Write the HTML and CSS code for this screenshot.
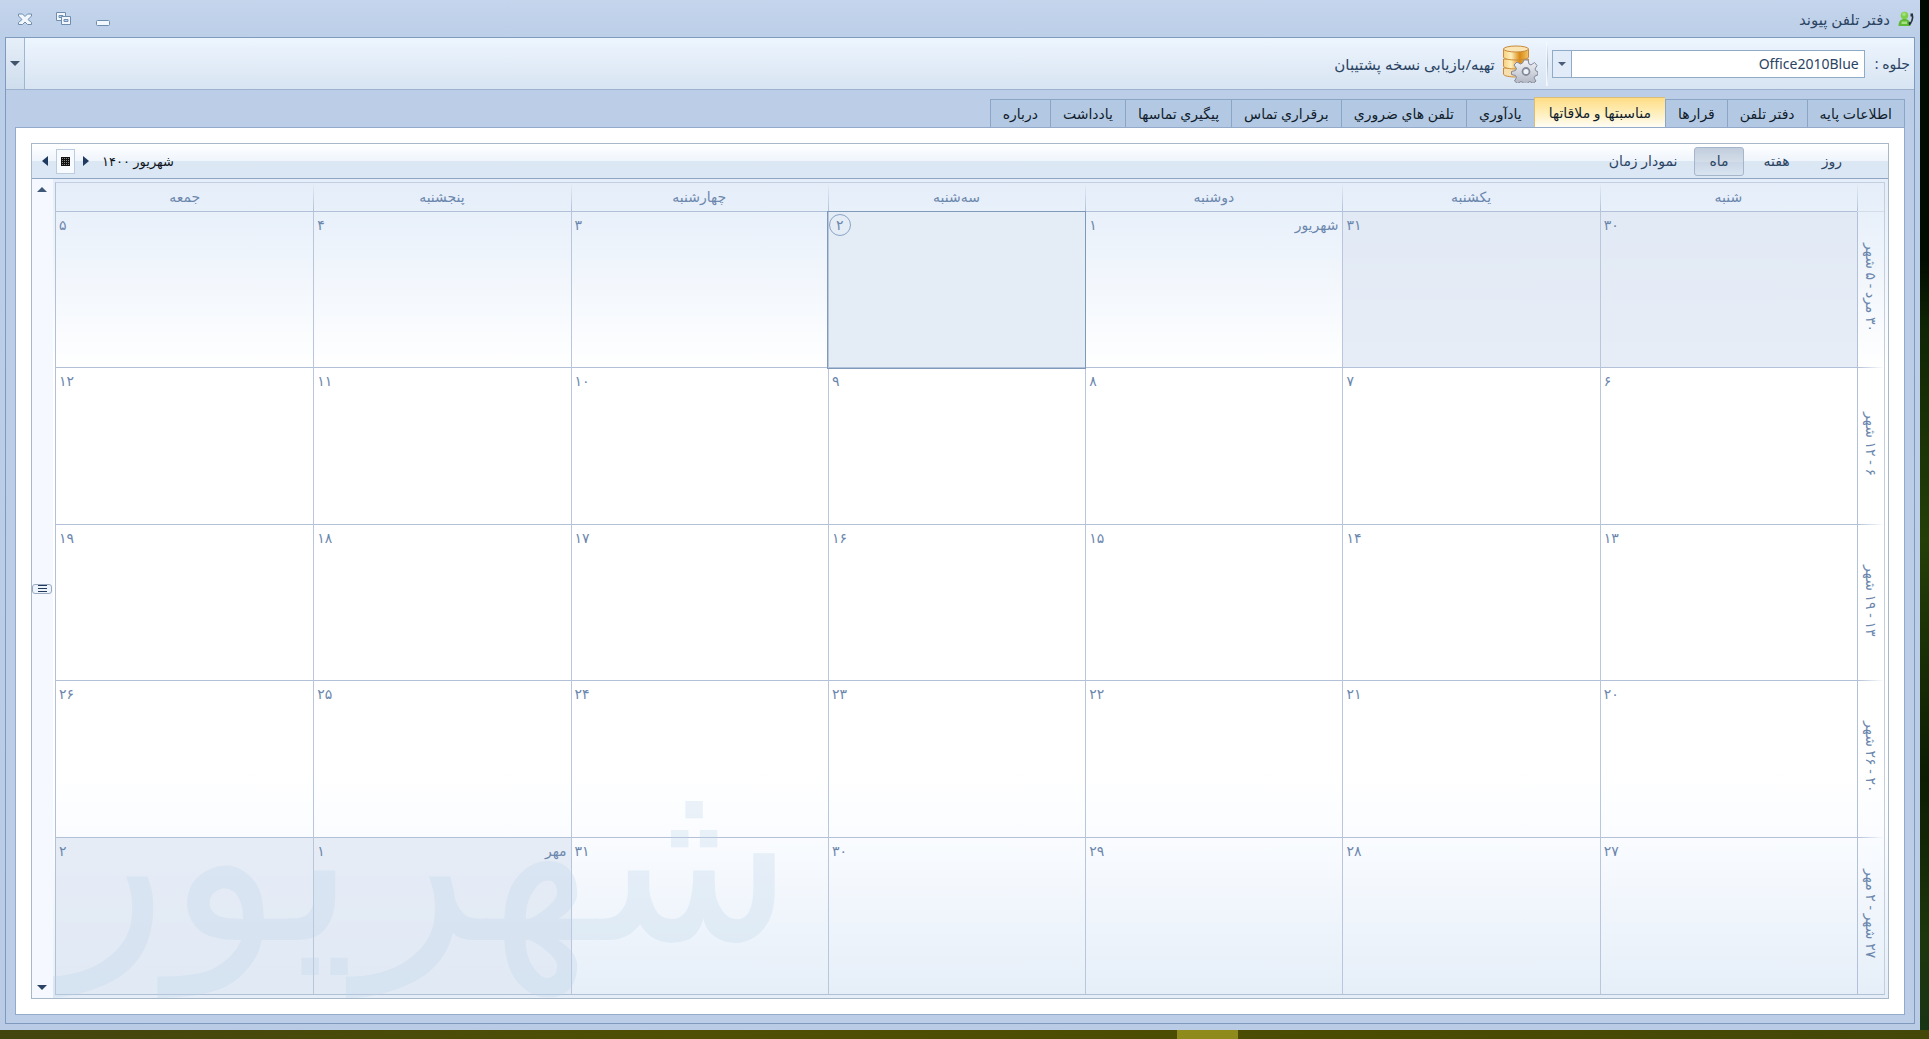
FILE: index.html
```html
<!DOCTYPE html>
<html lang="fa" dir="rtl">
<head>
<meta charset="utf-8">
<title>دفتر تلفن پیوند</title>
<link rel="stylesheet" href="styles.css">
</head>
<body>
<div class="window">
  <header class="titlebar">
    <svg class="app-icon" width="16" height="16" viewBox="0 0 16 16" aria-hidden="true">
      <circle cx="6.500" cy="4.500" r="3.800" fill="#7fcf4c"/>
      <circle cx="6" cy="3.200" r="1.800" fill="#a4e07c"/>
      <path d="M.5 15c0-4.500 2-7 6-7s6 2.500 6 7z" fill="#5fb836"/>
      <path d="M3.500 10.500h5.500v2.500H3.500z" fill="#a6e083"/>
      <path d="M14 3c1.200 3.500.8 7-2.500 10.500" fill="none" stroke="#26323f" stroke-width="1.600"/>
      <path d="M12.500 2.500h2.500v3h-2.500zM10.500 11.500l2-.8 1 1.800-2.500 2z" fill="#26323f"/>
    </svg>
    <h1 class="app-title">دفتر تلفن پیوند</h1>
    <div class="window-buttons">
      <button class="window-button" type="button" aria-label="کمینه">
        <svg width="16" height="16" viewBox="0 0 16 16"><rect x="1.500" y="9.500" width="13" height="5" rx="1" fill="#f2f7fd" stroke="#6f8eaf"/></svg>
      </button>
      <button class="window-button" type="button" aria-label="بازگردانی">
        <svg width="16" height="16" viewBox="0 0 16 16"><g fill="#f2f7fd" stroke="#6f8eaf"><path d="M.5 1.500h9v8h-9z"/><path d="M3 4.500h4v2H3z" fill="#bfd1e9"/><path d="M5.500 5.500h9v8h-9z"/><path d="M8 8.500h4v2H8z" fill="#bfd1e9"/></g></svg>
      </button>
      <button class="window-button" type="button" aria-label="بستن">
        <svg width="16" height="16" viewBox="0 0 16 16"><path d="M1.500 3h4L8 5.500 10.500 3h4v2l-3.500 3.500 3.500 3v2h-4L8 11l-2.500 2.500h-4v-2L5 8.500 1.500 5z" fill="#f2f7fd" stroke="#6f8eaf"/></svg>
      </button>
    </div>
  </header>

  <main class="frame">
    <div class="toolbar">
      <label class="theme-label" for="theme">جلوه :</label>
      <div class="combo">
        <select id="theme" class="combo-select"><option>Office2010Blue</option></select>
        <span class="combo-arrow"><svg width="8" height="4" viewBox="0 0 8 4"><path d="M0 0h8L4 4z" fill="#4a5d78"/></svg></span>
      </div>
      <span class="toolbar-separator"></span>
      <button class="backup-button" type="button">
        <svg width="36" height="38" viewBox="0 0 36 38" aria-hidden="true">
          <defs>
            <linearGradient id="gold"><stop offset="0" stop-color="#f8cf7c"/><stop offset=".3" stop-color="#fff0bd"/><stop offset=".65" stop-color="#d98a14"/><stop offset="1" stop-color="#f3c468"/></linearGradient>
            <linearGradient id="steel" x2="0" y2="1"><stop offset="0" stop-color="#f4f5f9"/><stop offset="1" stop-color="#a9afbd"/></linearGradient>
          </defs>
          <g stroke="#c98a3c">
            <path d="M1.500 23v6c0 4 25 4 25 0v-6z" fill="#f7dfab"/>
            <path d="M1.500 14v7c0 4 25 4 25 0v-7z" fill="url(#gold)"/>
            <path d="M1.500 4v8c0 4 25 4 25 0V4z" fill="url(#gold)"/>
            <ellipse cx="14" cy="4" rx="12.500" ry="3" fill="#fae6b4"/>
          </g>
          <path d="M22 15h4l1 4 2 1 3.500-2.500 2.500 3-2 3.500 1 2 1.800.5v3.500l-2.800 1-1 2 2 3-3 2.500-3-2-2 1-1 3.500h-3l-1-3.500-2-1-3.500 2-3-2.500 2-3.500-1-2-4-1v-3l4-1 1-2-2.500-3.500 3-3 3.500 2 2-1z" fill="url(#steel)" stroke="#84899a"/>
          <circle cx="24" cy="26.500" r="3.500" fill="#eef3fa" stroke="#84899a" stroke-width="1.800"/>
        </svg>
        <span>تهيه/بازيابى نسخه پشتيبان</span>
      </button>
      <button class="toolbar-overflow" type="button" aria-label="گزینه‌ها"><svg width="10" height="5" viewBox="0 0 10 5"><path d="M0 0h10L5 5z" fill="#42536c"/></svg></button>
    </div>

    <nav class="tabs">
      <button class="tab" type="button">اطلاعات پايه</button>
      <button class="tab" type="button">دفتر تلفن</button>
      <button class="tab" type="button">قرارها</button>
      <button class="tab tab-active" type="button">مناسبتها و ملاقاتها</button>
      <button class="tab" type="button">يادآوري</button>
      <button class="tab" type="button">تلفن هاي ضروري</button>
      <button class="tab" type="button">برقراري تماس</button>
      <button class="tab" type="button">پيگيري تماسها</button>
      <button class="tab" type="button">يادداشت</button>
      <button class="tab" type="button">درباره</button>
    </nav>

    <section class="page">
      <div class="calendar">
        <div class="calendar-bar">
          <button class="view" type="button">روز</button>
          <button class="view" type="button">هفته</button>
          <button class="view view-active" type="button">ماه</button>
          <button class="view" type="button">نمودار زمان</button>
          <div class="month-picker">
            <span class="month-name">شهریور ۱۴۰۰</span>
            <button class="month-step" type="button" aria-label="ماه قبل"><svg width="6" height="10" viewBox="0 0 6 10"><path d="M0 0l6 5-6 5z" fill="#1f3a5f"/></svg></button>
            <button class="month-today" type="button" aria-label="تقویم"><svg width="9" height="9" viewBox="0 0 9 9"><path d="M0 0h9v9H0z" fill="#111"/><path d="M1 1h1v1H1zM3 1h1v1H3zM5 1h1v1H5zM7 1h1v1H7zM1 3h1v1H1zM3 3h1v1H3zM5 3h1v1H5zM7 3h1v1H7zM1 5h1v1H1zM3 5h1v1H3zM5 5h1v1H5zM7 5h1v1H7zM1 7h1v1H1zM3 7h1v1H3zM5 7h1v1H5zM7 7h1v1H7z" fill="#888"/></svg></button>
            <button class="month-step" type="button" aria-label="ماه بعد"><svg width="6" height="10" viewBox="0 0 6 10"><path d="M6 0L0 5l6 5z" fill="#1f3a5f"/></svg></button>
          </div>
        </div>
        <div class="calendar-body">
          <div class="grid-area">
            <table class="month">
              <thead>
                <tr><th class="corner"></th><th>شنبه</th><th>یکشنبه</th><th>دوشنبه</th><th>سه‌شنبه</th><th>چهارشنبه</th><th>پنجشنبه</th><th>جمعه</th></tr>
              </thead>
              <tbody>
                <tr><th class="week"><span>۳۰ مرد - ۵ شهر</span></th><td class="other"><div class="day">۳۰</div></td><td class="other"><div class="day">۳۱</div></td><td><div class="day"><span class="day-month">شهریور</span>۱</div></td><td class="today"><div class="day"><span class="ring">۲</span></div></td><td><div class="day">۳</div></td><td><div class="day">۴</div></td><td><div class="day">۵</div></td></tr>
                <tr><th class="week"><span>۶ - ۱۲ شهر</span></th><td><div class="day">۶</div></td><td><div class="day">۷</div></td><td><div class="day">۸</div></td><td><div class="day">۹</div></td><td><div class="day">۱۰</div></td><td><div class="day">۱۱</div></td><td><div class="day">۱۲</div></td></tr>
                <tr><th class="week"><span>۱۳ - ۱۹ شهر</span></th><td><div class="day">۱۳</div></td><td><div class="day">۱۴</div></td><td><div class="day">۱۵</div></td><td><div class="day">۱۶</div></td><td><div class="day">۱۷</div></td><td><div class="day">۱۸</div></td><td><div class="day">۱۹</div></td></tr>
                <tr><th class="week"><span>۲۰ - ۲۶ شهر</span></th><td><div class="day">۲۰</div></td><td><div class="day">۲۱</div></td><td><div class="day">۲۲</div></td><td><div class="day">۲۳</div></td><td><div class="day">۲۴</div></td><td><div class="day">۲۵</div></td><td><div class="day">۲۶</div></td></tr>
                <tr><th class="week"><span>۲۷ شهر - ۲ مهر</span></th><td><div class="day">۲۷</div></td><td><div class="day">۲۸</div></td><td><div class="day">۲۹</div></td><td><div class="day">۳۰</div></td><td><div class="day">۳۱</div></td><td class="other"><div class="day"><span class="day-month">مهر</span>۱</div></td><td class="other"><div class="day">۲</div></td></tr>
              </tbody>
            </table>
            <div class="watermark" aria-hidden="true">شهریور</div>
          </div>
          <div class="scrollbar">
            <button class="scroll-button" type="button" aria-label="بالا"><svg width="10" height="5" viewBox="0 0 10 5"><path d="M0 5h10L5 0z" fill="#3f5878"/></svg></button>
            <button class="scroll-thumb" type="button" aria-label="پیمایش"><svg width="9" height="7" viewBox="0 0 9 7"><path d="M0 .5h9M0 3.500h9M0 6.500h9" stroke="#243a5a"/></svg></button>
            <button class="scroll-button" type="button" aria-label="پایین"><svg width="10" height="5" viewBox="0 0 10 5"><path d="M0 0h10L5 5z" fill="#2b4466"/></svg></button>
          </div>
        </div>
      </div>
    </section>
  </main>
</div>
<footer class="taskbar"><span class="task-active"></span></footer>
</body>
</html>
```
FILE: styles.css
```css
* { box-sizing: border-box; }

body {
  margin: 0;
  height: 100vh;
  display: flex;
  flex-direction: column;
  overflow: hidden;
  background: linear-gradient(#000a02 0%, #010c01 25%, #102605 32%, #253f08 52%, #0c1d03 75%, #1d360c 90%, #173415 100%);
  color: #2b4463;
  font: 14px/20px "Noto Sans", "DejaVu Sans", sans-serif;
}

button, select {
  margin: 0;
  padding: 0;
  border: 0;
  border-radius: 0;
  background: none;
  color: inherit;
  font: inherit;
}

svg { display: block; flex: none; }

.window {
  flex: 1;
  min-height: 0;
  display: flex;
  flex-direction: column;
  margin-right: 9px;
  padding: 0 5px 6px;
  background: linear-gradient(#c4d5ec, #bccfe8 38px, #bacce5);
}

.titlebar {
  height: 37px;
  display: flex;
  align-items: center;
  gap: 8px;
  padding: 0 1px 0 12px;
}

.app-title { margin: 0; font-size: 15px; font-weight: 400; }

.window-buttons {
  margin-right: auto;
  display: flex;
  gap: 23px;
}

.frame {
  flex: 1;
  min-height: 0;
  display: flex;
  flex-direction: column;
  border: 1px solid #7f9abd;
  background: #bccee7;
}

.toolbar {
  height: 52px;
  display: flex;
  align-items: center;
  padding-right: 4px;
  border-bottom: 1px solid #9db2cf;
  background: linear-gradient(#edf5fe, #d8e4f2);
}

.theme-label { margin-left: 10px; }

.combo { position: relative; width: 313px; height: 28px; }

.combo-select {
  width: 100%;
  height: 100%;
  padding: 0 5px 0 20px;
  border: 1px solid #8fabc6;
  background: #fff;
  appearance: none;
}

.combo-arrow {
  position: absolute;
  left: 1px;
  top: 1px;
  bottom: 1px;
  width: 19px;
  display: grid;
  place-items: center;
  border-right: 1px solid #8fabc6;
  background: #e2ecf8;
  pointer-events: none;
}

.toolbar-separator {
  width: 2px;
  height: 44px;
  margin: 0 4px 0 8px;
  background: linear-gradient(transparent, #a9bcd5, transparent) right / 1px 100% no-repeat, #f4f8fd;
}

.backup-button {
  display: flex;
  align-items: center;
  gap: 7px;
  font-size: 15px;
}

.toolbar-overflow {
  align-self: stretch;
  width: 19px;
  margin-right: auto;
  display: grid;
  place-items: center;
  border-right: 1px solid #9fb6d3;
  background: linear-gradient(#e6eff9, #cfdded);
}

.tabs {
  display: flex;
  align-items: flex-end;
  height: 37px;
  padding: 0 9px;
}

.tab {
  height: 28px;
  padding: 0 12px;
  border: 1px solid #8ba5c7;
  border-bottom: 0;
  background: #b3c9e3;
  color: #111c2c;
}

.tab + .tab { border-right: 0; }

.tab-active {
  height: 30px;
  padding: 0 14px;
  background: linear-gradient(#ffdd85, #ffeeb9 50%, #fffdf5);
  border-color: #d9bd78;
}

.page {
  flex: 1;
  min-height: 0;
  display: flex;
  margin: 0 9px 8px;
  padding: 15px;
  border: 1px solid #93aaca;
  background: #fff;
}

.calendar {
  flex: 1;
  min-width: 0;
  display: flex;
  flex-direction: column;
  border: 1px solid #a9b8c9;
}

.calendar-bar {
  height: 35px;
  display: flex;
  align-items: center;
  padding: 0 30px 0 6px;
  border-bottom: 1px solid #8fa6c3;
  background: linear-gradient(#fff, #eff5fc 50%, #dce7f4 50%, #dbe7f5);
}

.view {
  height: 29px;
  padding: 0 15px;
  border: 1px solid transparent;
  border-radius: 3px;
}

.view-active {
  margin: 0 4px 0 1px;
  padding: 0 14px;
  border-color: #a5b5ca;
  background: linear-gradient(#c2cddd, #d3dde9 50%, #c9d5e5 50%, #d9e4f1);
}

.month-picker {
  margin-right: auto;
  display: flex;
  align-items: center;
}

.month-name { margin-left: 9px; color: #0d1420; font-size: 13px; }

.month-step { width: 14px; height: 24px; display: grid; place-items: center; }

.month-today {
  width: 19px;
  height: 25px;
  margin: 0 4px;
  display: grid;
  place-items: center;
  border: 1px solid #bccbdd;
  background: #f7faff;
}

.calendar-body {
  flex: 1;
  min-height: 0;
  display: flex;
  background: #e6eefa;
}

.grid-area {
  position: relative;
  flex: 1;
  min-width: 0;
  padding: 3px 3px 3px 2px;
  overflow: hidden;
  background: linear-gradient(#e4edf9 0, #e8f0fa 32px, #fff 190px, #fff 72%, #fafcff 80%, #e5eef8 100%);
}

.month {
  width: 100%;
  height: 100%;
  table-layout: fixed;
  border-spacing: 0;
  border: 1px solid #c3cfdf;
  border-left-color: #b3c1d5;
  border-bottom-color: #b3c1d5;
  color: #6c87ad;
}

.month th, .month td { padding: 0; font-weight: 400; }

.month tbody tr { height: 20%; }

.month thead th {
  height: 29px;
  border-bottom: 1px solid #b3c1d8;
  background: linear-gradient(transparent, #b3c1d8) left / 1px 100% no-repeat;
}

.month thead th:last-child { background: none; }

.month .corner { width: 27px; border-bottom-color: #d3dcea; }

.month td {
  vertical-align: top;
  border-left: 1px solid #b9c6dc;
  border-bottom: 1px solid #b3c1d8;
}

.month td:last-child { border-left: 0; }

.month tr:last-child td { border-bottom: 0; }

.month .week {
  border-left: 1px solid #b3c1d8;
  background: linear-gradient(to right, #b3c1d8, transparent) bottom / 100% 1px no-repeat;
}

.month tr:last-child .week { background: none; }

.week span { writing-mode: vertical-rl; line-height: 20px; }

.month .other { background: rgba(223, 231, 243, .75); }

.month .today { background: #e4ecf6; outline: 1px solid #7f99ba; }

.day {
  display: flex;
  justify-content: flex-end;
  padding: 3px 4px 3px 3px;
}

.day-month { margin-left: auto; }

.ring {
  width: 22px;
  height: 22px;
  margin: -1px 0 0 -3px;
  border: 1px solid #8ba4c6;
  border-radius: 50%;
  text-align: center;
}

.watermark {
  position: absolute;
  left: 0;
  bottom: 21px;
  color: #bcd4e9;
  opacity: .28;
  font-family: "DejaVu Sans", sans-serif;
  font-size: 237px;
  line-height: 237px;
  white-space: nowrap;
  pointer-events: none;
}

.scrollbar {
  width: 21px;
  display: flex;
  flex-direction: column;
  align-items: flex-end;
  justify-content: space-between;
  background: #f5f9ff;
}

.scroll-button { width: 20px; height: 21px; display: grid; place-items: center; }

.scroll-thumb {
  width: 20px;
  height: 10px;
  display: grid;
  place-items: center;
  border: 1px solid #98a9c0;
  border-radius: 3px;
  background: #edf4fc;
}

.taskbar {
  height: 9px;
  direction: ltr;
  background: linear-gradient(to right, #43450f, #4f5005 35%, #4b4c03 70%, #434708);
}

.task-active {
  display: block;
  width: 61px;
  height: 9px;
  margin-left: 61%;
  background: #8e8b1c;
}
```
